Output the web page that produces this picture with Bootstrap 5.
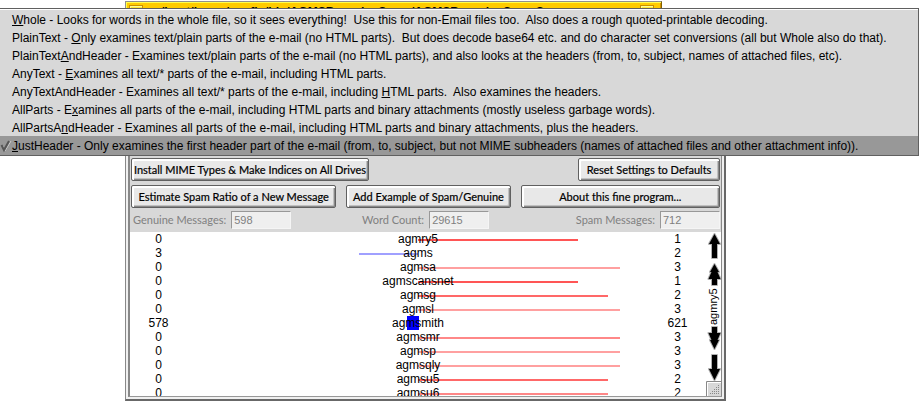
<!DOCTYPE html>
<html lang="en">
<head>
<meta charset="utf-8">
<meta name="viewport" content="width=device-width, initial-scale=1">
<title>AGMSBayesianSpamServer</title>
<link href="https://cdn.jsdelivr.net/npm/bootstrap@5.3.0/dist/css/bootstrap.min.css" rel="stylesheet">
<script src="https://cdn.jsdelivr.net/npm/bootstrap@5.3.0/dist/js/bootstrap.bundle.min.js" defer></script>
<style>
body{font-family:"Liberation Sans",Arial,sans-serif;font-size:12px;line-height:18px;color:#000;background:#fff}
.desk{padding:1px 194px 0 125px}
.title-tab{width:537px;max-width:100%;height:20px;background:#ffcb00;border:1px solid #909090;border-right-color:#806000;border-bottom:0;box-shadow:inset 1px 1px #ffff50,inset -1px 0 #d09000;padding:3px 7px 0 3px}
.title-box{width:14px;height:13px;background:#ffe838;border:1px solid #c89000;border-radius:0;box-shadow:inset 1px 1px #ffff90;padding:0}
.title-text{font-weight:700;line-height:14px;padding-left:18px}
.win{border:1px solid #888;border-right:2px solid #686868;border-bottom:2px solid #686868;background:#f0f0f0;padding:2px}
.win-in{border:1px solid #888;border-left-width:2px;border-bottom-color:#989898;background:#d8d8d8}
.settings{padding:133px 1px 3px 1px}
.button-row{gap:10px;margin-bottom:4px}
.be-btn,.be-btn:hover,.be-btn:active{font-family:Lato,sans-serif;font-size:11px;line-height:14px;color:#000;background:#e8e8e8;border:1px solid #606060;border-radius:2px;height:23px;padding:3px 1px;white-space:nowrap;box-shadow:inset 2px 2px #fff,inset -1px -1px #888,inset -2px -2px #c0c0c0;-webkit-text-stroke:.2px #000}
.w-install{flex:0 1 238px}
.w-reset{flex:0 1 142px}
.w-estimate{flex:206 1 0}
.w-add{flex:164 1 0}
.w-about{flex:200 1 0}
.stats{color:#808080;line-height:18px;margin-top:-1px;padding-left:2px}
.stats label{font-family:Lato,sans-serif;font-size:11px}
.stats input{width:60px;height:18px;border:1px solid #989898;border-right-color:#f5f5f5;border-bottom-color:#f5f5f5;border-radius:0;background:#efefef;color:#808080;padding:0 2px;font-size:11px;line-height:14px}
.stats .pair{gap:5px}
.words{height:164px;background:#fff;overflow:hidden;line-height:14px}
.word-list{padding-top:1px}
.word-row{display:grid;grid-template-columns:57px 1fr 57px;height:14px;text-align:center}
.word-row>div{margin-top:-1px}
.word{position:relative}
.word span{position:relative}
.bar{position:absolute;top:7px;height:2px;left:50%}
.bar.genuine{left:auto;right:50%;background:#a0a0ff}
.bar.s1{background:#f55}
.bar.s2{background:#ff6868}
.bar.s3{background:#ffa0a0}
.bar.s4{background:#ff8888}
.bar.both{left:auto;right:50%;margin-right:-1px;top:0;height:14px;width:12px;background:#00f}
.scroller{width:15px}
.pop{position:absolute;top:8px;left:0;right:1px;background:#d8d8d8;border:1px solid #606060;border-left:0;box-shadow:inset 0 1px #fff;padding-top:1px;z-index:5}
.pop button{display:flex;width:100%;border:0;background:none;text-align:left;padding:1px 0 0;height:18px;line-height:18px;white-space:pre;color:#000}
.pop .tick{flex:0 0 12px;height:18px}
.pop .on{background:#989898;height:19px}
</style>
</head>
<body class="overflow-hidden">
<div class="desk">
  <div class="title-tab d-flex">
    <button class="title-box" aria-label="Close"></button>
    <div class="title-text flex-grow-1 text-nowrap overflow-hidden">/boot/home/config/bin/AGMSBayesianSpam/AGMSBayesianSpamServer</div>
    <button class="title-box" aria-label="Zoom"></button>
  </div>
  <main class="win"><div class="win-in">
    <div class="settings">
      <div class="button-row d-flex justify-content-between">
        <button class="btn be-btn w-install">Install MIME Types &amp; Make Indices on All Drives</button>
        <button class="btn be-btn w-reset">Reset Settings to Defaults</button>
      </div>
      <div class="button-row d-flex">
        <button class="btn be-btn w-estimate">Estimate Spam Ratio of a New Message</button>
        <button class="btn be-btn w-add">Add Example of Spam/Genuine</button>
        <button class="btn be-btn w-about">About this fine program...</button>
      </div>
      <div class="stats d-flex justify-content-between">
        <div class="pair d-flex"><label for="genuine">Genuine Messages:</label><input id="genuine" value="598" disabled></div>
        <div class="pair d-flex me-3"><label for="count">Word Count:</label><input id="count" value="29615" disabled></div>
        <div class="pair d-flex"><label for="spam">Spam Messages:</label><input id="spam" value="712" disabled></div>
      </div>
    </div>
    <div class="words d-flex">
      <div class="word-list flex-grow-1">
        <div class="word-row"><div>0</div><div class="word"><i class="bar s1" style="width:34.6%"></i><span>agmry5</span></div><div>1</div></div>
        <div class="word-row"><div>3</div><div class="word"><i class="bar genuine" style="width:12.8%"></i><span>agms</span></div><div>2</div></div>
        <div class="word-row"><div>0</div><div class="word"><i class="bar s3" style="width:43.7%"></i><span>agmsa</span></div><div>3</div></div>
        <div class="word-row"><div>0</div><div class="word"><i class="bar s1" style="width:34.6%"></i><span>agmscansnet</span></div><div>1</div></div>
        <div class="word-row"><div>0</div><div class="word"><i class="bar s2" style="width:41.1%"></i><span>agmsg</span></div><div>2</div></div>
        <div class="word-row"><div>0</div><div class="word"><i class="bar s3" style="width:43.7%"></i><span>agmsl</span></div><div>3</div></div>
        <div class="word-row"><div>578</div><div class="word"><i class="bar both"></i><span>agmsmith</span></div><div>621</div></div>
        <div class="word-row"><div>0</div><div class="word"><i class="bar s4" style="width:43.7%"></i><span>agmsmr</span></div><div>3</div></div>
        <div class="word-row"><div>0</div><div class="word"><i class="bar s3" style="width:43.7%"></i><span>agmsp</span></div><div>3</div></div>
        <div class="word-row"><div>0</div><div class="word"><i class="bar s3" style="width:43.7%"></i><span>agmsqly</span></div><div>3</div></div>
        <div class="word-row"><div>0</div><div class="word"><i class="bar s2" style="width:41.1%"></i><span>agmsu5</span></div><div>2</div></div>
        <div class="word-row"><div>0</div><div class="word"><i class="bar s4" style="width:41.1%"></i><span>agmsu6</span></div><div>2</div></div>
      </div>
      <svg class="scroller flex-shrink-0" width="15" height="164" viewBox="0 0 15 164">
        <g stroke="#b0b0b0" stroke-width="2" stroke-linejoin="round" paint-order="stroke">
          <path d="M8.500 2l5.500 10h-3v14h-5v-14h-3z"/>
          <path d="M8.500 32l4.500 8h-1.500l3 7h-3.500v6h-5v-6h-3.500l3-7h-1.500z"/>
          <path d="M6 95h5v6h3.500l-3 7h1.500l-4.500 9l-4.500-9h1.500l-3-7h3.500z"/>
          <path d="M6 123h5v14h3l-5.500 11l-5.500-11h3z"/>
        </g>
        <text transform="translate(11 93) rotate(-90)" font-size="11">agmry5</text>
        <path d="M0 164V150H15V164z" fill="#d8d8d8"/>
        <path d="M.5 164V149.500H15" fill="none" stroke="#888"/>
        <path d="M1.500 164V150.500H15" fill="none" stroke="#fff"/>
        <path d="M12.500 153v10M10.500 155v8M8.500 157v6M6.500 159v4M4.500 161v2" stroke="#888" stroke-dasharray="1 1"/>
      </svg>
    </div>
  </div></main>
</div>
<div class="pop" role="menu">
<button role="menuitem"><span class="tick"></span><span><u>W</u>hole - Looks for words in the whole file, so it sees everything!  Use this for non-Email files too.  Also does a rough quoted-printable decoding.</span></button>
<button role="menuitem"><span class="tick"></span><span>PlainText - <u>O</u>nly examines text/plain parts of the e-mail (no HTML parts).  But does decode base64 etc. and do character set conversions (all but Whole also do that).</span></button>
<button role="menuitem"><span class="tick"></span><span>PlainText<u>A</u>ndHeader - Examines text/plain parts of the e-mail (no HTML parts), and also looks at the headers (from, to, subject, names of attached files, etc).</span></button>
<button role="menuitem"><span class="tick"></span><span>AnyText - <u>E</u>xamines all text/* parts of the e-mail, including HTML parts.</span></button>
<button role="menuitem"><span class="tick"></span><span>AnyTextAndHeader - Examines all text/* parts of the e-mail, including <u>H</u>TML parts.  Also examines the headers.</span></button>
<button role="menuitem"><span class="tick"></span><span>AllParts - E<u>x</u>amines all parts of the e-mail, including HTML parts and binary attachments (mostly useless garbage words).</span></button>
<button role="menuitem"><span class="tick"></span><span>AllPartsA<u>n</u>dHeader - Examines all parts of the e-mail, including HTML parts and binary attachments, plus the headers.</span></button>
<button role="menuitem" class="on"><svg class="tick" width="12" height="18" viewBox="0 0 12 18" fill="none"><path d="M3 9l2 5l6-10" stroke="#ccc"/><path d="M1.500 8l2.500 5l5-9" stroke="#555" stroke-width="2"/></svg><span><u>J</u>ustHeader - Only examines the first header part of the e-mail (from, to, subject, but not MIME subheaders (names of attached files and other attachment info)).</span></button>
</div>
</body>
</html>
